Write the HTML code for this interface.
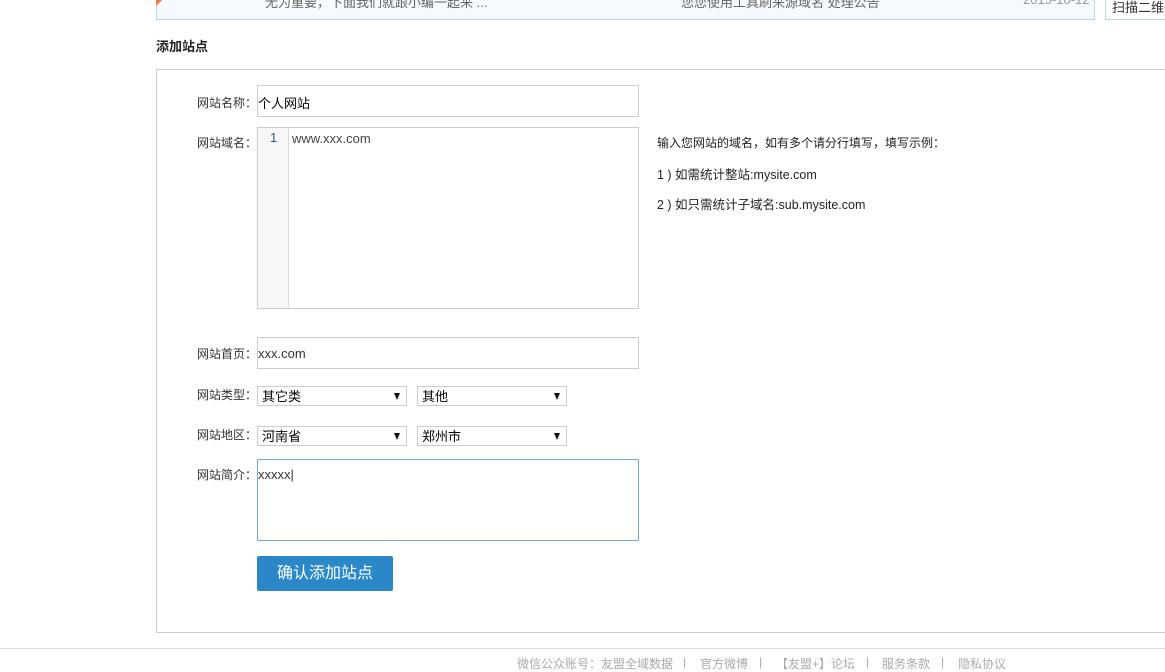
<!DOCTYPE html>
<html><head><meta charset="utf-8"><style>
body{margin:0;width:1165px;height:671px;overflow:hidden;background:#fff;font-family:"Liberation Sans","Microsoft YaHei","Noto Sans CJK SC",sans-serif;font-size:12px;color:#333;position:relative}
.a{position:absolute;white-space:nowrap}
.lbl{position:absolute;left:197px;font-size:12px;color:#333;white-space:nowrap}
.inp{position:absolute;border:1px solid #ccc;background:#fff;box-sizing:border-box}
.sel{position:absolute;border:1px solid #ccc;box-sizing:border-box;height:20px;width:150px;font-size:13px;color:#000;padding:1px 0 0 4px;line-height:18px}
.sel:after{content:"";position:absolute;right:6px;top:6px;border-left:3.5px solid transparent;border-right:3.5px solid transparent;border-top:7px solid #111}
.f{position:absolute;top:655px;font-size:12px;color:#aaa;white-space:nowrap}
</style></head><body>
<div class="a" style="left:156px;top:-5px;width:939px;height:25px;background:#f5fafe;border:1px solid #b8d6ee;box-sizing:border-box"></div>
<div class="a" style="left:156px;top:0;width:0;height:0;border-top:6px solid #f07a3a;border-right:6px solid transparent"></div>
<div class="a" style="left:265px;top:-8px;font-size:13px;color:#666">无为重要，下面我们就跟小编一起来 ...</div>
<div class="a" style="left:681px;top:-8px;font-size:13px;color:#666">您您使用工具刷来源域名 处理公告</div>
<div class="a" style="left:1023px;top:-8px;font-size:13px;color:#999">2015-10-12</div>
<div class="a" style="left:1105px;top:-5px;width:70px;height:25px;border:1px solid #b8d6ee;box-sizing:border-box"></div>
<div class="a" style="left:1112px;top:-3px;font-size:13px;color:#333">扫描二维码</div>

<div class="a" style="left:156px;top:36px;font-size:13px;font-weight:bold;color:#222">添加站点</div>
<div class="a" style="left:156px;top:69px;width:1020px;height:564px;border:1px solid #ccc;box-sizing:border-box"></div>

<div class="lbl" style="top:94px">网站名称：</div>
<div class="inp" style="left:257px;top:85px;width:382px;height:32px"></div>
<div class="a" style="left:258px;top:93px;font-size:13px;color:#000">个人网站</div>

<div class="lbl" style="top:134px">网站域名：</div>
<div class="inp" style="left:257px;top:127px;width:382px;height:182px"></div>
<div class="a" style="left:258px;top:128px;width:30px;height:180px;background:#f7f7f7;border-right:1px solid #ddd"></div>
<div class="a" style="left:270px;top:130px;font-size:13px;color:#2a5a8a">1</div>
<div class="a" style="left:292px;top:131px;font-size:13px;color:#444">www.xxx.com</div>

<div class="a" style="left:657px;top:134px;font-size:12px;color:#222">输入您网站的域名，如有多个请分行填写，填写示例：</div>
<div class="a" style="left:657px;top:164px;font-size:12.5px;color:#222">1 ) 如需统计整站:mysite.com</div>
<div class="a" style="left:657px;top:194px;font-size:12.5px;color:#222">2 ) 如只需统计子域名:sub.mysite.com</div>

<div class="lbl" style="top:345px">网站首页：</div>
<div class="inp" style="left:257px;top:337px;width:382px;height:32px"></div>
<div class="a" style="left:258px;top:346px;font-size:13px;color:#333">xxx.com</div>

<div class="lbl" style="top:386px">网站类型：</div>
<div class="sel" style="left:257px;top:386px">其它类</div>
<div class="sel" style="left:417px;top:386px">其他</div>

<div class="lbl" style="top:426px">网站地区：</div>
<div class="sel" style="left:257px;top:426px">河南省</div>
<div class="sel" style="left:417px;top:426px">郑州市</div>

<div class="lbl" style="top:466px">网站简介：</div>
<div class="inp" style="left:257px;top:459px;width:382px;height:82px;border-color:#7aa7ea"></div>
<div class="a" style="left:258px;top:467px;font-size:13px;color:#333">xxxxx|</div>

<div class="a" style="left:257px;top:556px;width:136px;height:35px;background:#2b88c8;border-radius:2px;color:#fff;font-size:16px;line-height:35px;text-align:center">确认添加站点</div>

<div class="a" style="left:0;top:648px;width:1165px;border-top:1px solid #ddd"></div>
<div class="f" style="left:517px">微信公众账号：友盟全域数据</div>
<div class="f" style="left:683px">|</div>
<div class="f" style="left:700px">官方微博</div>
<div class="f" style="left:759px">|</div>
<div class="f" style="left:776px">【友盟+】论坛</div>
<div class="f" style="left:866px">|</div>
<div class="f" style="left:882px">服务条款</div>
<div class="f" style="left:941px">|</div>
<div class="f" style="left:958px">隐私协议</div>
</body></html>
